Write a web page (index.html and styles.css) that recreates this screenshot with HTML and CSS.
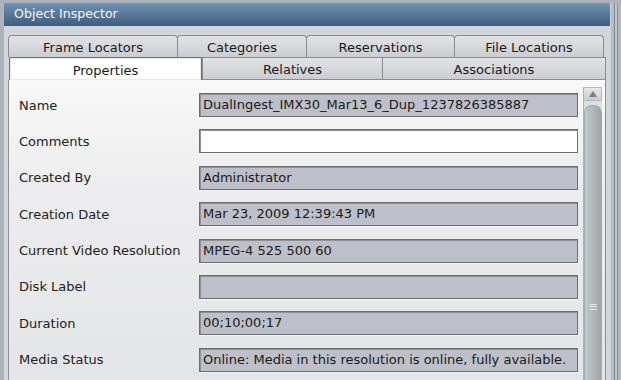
FILE: index.html
```html
<!DOCTYPE html>
<html>
<head>
<meta charset="utf-8">
<link rel="stylesheet" href="styles.css">
</head>
<body>
<div class="screen">
  <div class="window">
    <div class="titlebar">Object Inspector</div>
    <div class="wbody">
      <div class="tabs">
        <div class="tabrow row1">
          <div class="tab t-frame">Frame Locators</div>
          <div class="tab t-cat">Categories</div>
          <div class="tab t-res">Reservations</div>
          <div class="tab t-file">File Locations</div>
        </div>
        <div class="tabrow row2">
          <div class="tab t-prop selected">Properties</div>
          <div class="tab t-rel">Relatives</div>
          <div class="tab t-assoc">Associations</div>
        </div>
      </div>
      <div class="panel">
        <div class="form">
          <div class="row"><div class="label">Name</div><div class="field">DualIngest_IMX30_Mar13_6_Dup_1237826385887</div></div>
          <div class="row"><div class="label">Comments</div><div class="field editable"></div></div>
          <div class="row"><div class="label">Created By</div><div class="field">Administrator</div></div>
          <div class="row"><div class="label">Creation Date</div><div class="field">Mar 23, 2009 12:39:43 PM</div></div>
          <div class="row"><div class="label">Current Video Resolution</div><div class="field">MPEG-4 525 500 60</div></div>
          <div class="row"><div class="label">Disk Label</div><div class="field"></div></div>
          <div class="row"><div class="label">Duration</div><div class="field">00;10;00;17</div></div>
          <div class="row"><div class="label">Media Status</div><div class="field">Online: Media in this resolution is online, fully available.</div></div>
        </div>
        <div class="scrollbar">
          <div class="sb-up"><svg width="10" height="8" viewBox="0 0 10 8"><path d="M1 7 L5 1 L9 7 Z" fill="#7a7e84"/></svg></div>
          <div class="sb-thumb"><div class="grip"></div></div>
        </div>
      </div>
    </div>
  </div>
  <div class="edge"></div>
</div>
</body>
</html>
```

FILE: styles.css
```css
* { box-sizing: border-box; }
html, body { margin: 0; padding: 0; }
body {
  width: 621px;
  height: 380px;
  overflow: hidden;
  background: #aeb2ba;
  font-family: "DejaVu Sans", "Liberation Sans", sans-serif;
  font-size: 13px;
  color: #1a1a1a;
}
.screen {
  display: flex;
  height: 380px;
  padding: 3px 0 0 4px;
}
.window {
  width: 606px;
  display: flex;
  flex-direction: column;
}
.edge {
  width: 11px;
  border-left: 1px solid #cfd2d7;
  background: linear-gradient(90deg, #b9bcc3 0, #b9bcc3 3px, #7d8188 3px, #7d8188 4px, #c4c7cc 4px, #c4c7cc 6px, #8a8e95 6px, #8a8e95 7px, #b3b7bf 7px);
}
.titlebar {
  height: 23px;
  background: linear-gradient(180deg, #7393b3 0%, #5a7a9c 45%, #3f5d7d 100%);
  color: #f2f5f8;
  font-size: 12.6px;
  padding: 3px 0 0 10px;
}
.wbody {
  flex: 1;
  background: #d2d5da;
  padding: 9px 4px 0 4px;
  display: flex;
  flex-direction: column;
}
.tabs { display: flex; flex-direction: column; }
.tabrow { display: flex; height: 22px; }
.row2 { height: 23px; }
.tab {
  display: flex;
  align-items: center;
  justify-content: center;
  background: linear-gradient(180deg, #e2e3e6 0%, #cbcdd2 100%);
  border: 1px solid #8a8c90;
  border-bottom: none;
  border-right: none;
  color: #1a1a1a;
  padding-top: 2px;
}
.row1 .tab { border-radius: 4px 4px 0 0; border-right: 1px solid #8a8c90; margin-right: -1px; }
.row1 .t-file { margin-right: 0; }
.t-frame { width: 170px; }
.t-cat { width: 130px; }
.t-res { width: 149px; }
.t-file { width: 150px; }
.row2 .tab { border-bottom: 1px solid #8a8c90; }
.t-prop { width: 193px; margin-left: 1px; }
.t-rel { width: 180px; }
.t-assoc { width: 224px; border-right: 1px solid #8a8c90 !important; }
.tab.selected {
  background: #ffffff;
  border: 1px solid #6f7276;
  border-bottom: none;
  box-shadow: inset 0 0 0 1px #e8e9eb;
}
.panel {
  flex: 1;
  display: flex;
  background: linear-gradient(180deg, #f8f8f8 0%, #ececee 40%, #e4e5e8 100%);
  border-left: 1px solid #8c8f94;
  border-right: 1px solid #8c8f94;
}
.form {
  flex: 1;
  padding: 13px 0 0 10px;
  display: grid;
  grid-auto-rows: 24px;
  row-gap: 12.4px;
  align-content: start;
}
.row { display: flex; align-items: center; }
.label { width: 180px; color: #222; white-space: nowrap; }
.field {
  width: 379px;
  height: 24px;
  background: #bdc0c8;
  border: 1px solid #6b6d71;
  box-shadow: inset 1px 1px 0 #8e9095, 0 1px 0 #f4f4f4;
  padding: 3px 0 0 3px;
  color: #1a1a1a;
  white-space: nowrap;
  overflow: hidden;
}
.field.editable { background: #ffffff; }
.scrollbar {
  width: 19px;
  margin: 7px 3px 0 4px;
  display: flex;
  flex-direction: column;
  background: #dcdee1;
  border-left: 1px solid #9fb9bb;
}
.sb-up {
  height: 14px;
  display: flex;
  align-items: center;
  justify-content: center;
  background: linear-gradient(180deg, #e6e8ea, #c9ccd0);
  border: 1px solid #b5b8bc;
  border-left: none;
}
.sb-thumb {
  flex: 1;
  margin-top: 4px;
  border: 1px solid #8fb5b8;
  border-bottom: none;
  border-radius: 8px 8px 0 0;
  background: linear-gradient(90deg, #c7cacd 0%, #b3b6b9 50%, #9fa3a6 100%);
  position: relative;
}
.grip {
  position: absolute;
  left: 5px;
  top: 198px;
  width: 7px;
  height: 6px;
  background: repeating-linear-gradient(180deg, #e6e8ea 0, #e6e8ea 1px, transparent 1px, transparent 2.5px);
}
```
